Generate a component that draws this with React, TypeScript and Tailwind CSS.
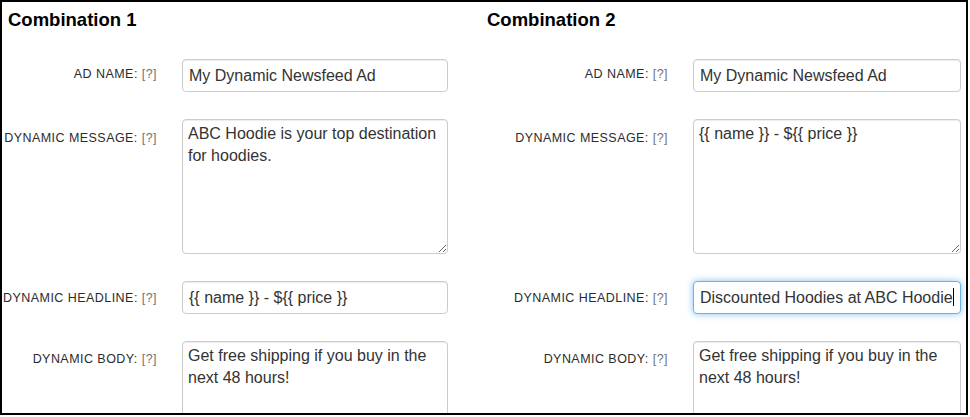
import React from 'react';

type Field = {
  label: string;
  value: string;
  multiline?: boolean;
  focused?: boolean;
  labelPad: string;
};

const left: Field[] = [
  { label: 'Ad Name:', value: 'My Dynamic Newsfeed Ad', labelPad: 'pt-[7px]' },
  {
    label: 'Dynamic Message:',
    value: 'ABC Hoodie is your top destination for hoodies.',
    multiline: true,
    labelPad: 'pt-[11px]',
  },
  { label: 'Dynamic Headline:', value: '{{ name }} - ${{ price }}', labelPad: 'pt-[9px]' },
  {
    label: 'Dynamic Body:',
    value: 'Get free shipping if you buy in the next 48 hours!',
    multiline: true,
    labelPad: 'pt-[10px]',
  },
];

const right: Field[] = [
  { label: 'Ad Name:', value: 'My Dynamic Newsfeed Ad', labelPad: 'pt-[7px]' },
  {
    label: 'Dynamic Message:',
    value: '{{ name }} - ${{ price }}',
    multiline: true,
    labelPad: 'pt-[11px]',
  },
  {
    label: 'Dynamic Headline:',
    value: 'Discounted Hoodies at ABC Hoodie',
    focused: true,
    labelPad: 'pt-[9px]',
  },
  {
    label: 'Dynamic Body:',
    value: 'Get free shipping if you buy in the next 48 hours!',
    multiline: true,
    labelPad: 'pt-[10px]',
  },
];

function Row({ field, labelWidth, inputWidth }: { field: Field; labelWidth: string; inputWidth: string }) {
  return (
    <div className="flex items-start gap-[25px]">
      <div
        className={`${labelWidth} ${field.labelPad} shrink-0 whitespace-nowrap text-right text-[12.5px] leading-[16px] tracking-[0.45px] uppercase text-[#2b2b2b]`}
      >
        {field.label} <span className="text-[#707070]">[?]</span>
      </div>
      {field.multiline ? (
        <textarea
          readOnly
          defaultValue={field.value}
          className={`${inputWidth} h-[135px] shrink-0 rounded-[4px] border border-[#ccc] bg-white px-[5px] py-[3px] text-[16px] leading-[22px] text-[#333] shadow-[inset_0_1px_1px_rgba(0,0,0,0.075)] outline-none`}
        />
      ) : field.focused ? (
        <div
          className={`${inputWidth} h-[33px] shrink-0 overflow-hidden whitespace-nowrap rounded-[4px] border border-[#6fb0e8] bg-white px-[6px] text-[16px] leading-[31px] text-[#333] shadow-[0_0_7px_rgba(82,168,236,0.7)]`}
        >
          {field.value}
          <span className="inline-block h-[18px] w-px translate-y-[3px] bg-black align-baseline" />
        </div>
      ) : (
        <div
          className={`${inputWidth} h-[33px] shrink-0 overflow-hidden whitespace-nowrap rounded-[4px] border border-[#ccc] bg-white px-[6px] text-[16px] leading-[31px] text-[#333] shadow-[inset_0_1px_1px_rgba(0,0,0,0.075)]`}
        >
          {field.value}
        </div>
      )}
    </div>
  );
}

export default function App() {
  return (
    <div className="h-[417px] w-[970px] bg-white font-['Liberation_Sans',Arial,sans-serif]">
      <div className="flex h-[415px] w-[968px] overflow-hidden border-2 border-black bg-white">
        {/* Combination 1 */}
        <div className="w-[478px] shrink-0">
          <h2 className="mt-[6px] pl-[6px] text-[18.5px] font-bold leading-[24px] text-black">Combination 1</h2>
          <div className="mt-[27px] flex flex-col gap-[27px]">
            {left.map((f) => (
              <Row key={f.label} field={f} labelWidth="w-[155px]" inputWidth="w-[266px]" />
            ))}
          </div>
        </div>

        {/* Combination 2 */}
        <div className="flex-1">
          <h2 className="mt-[6px] pl-[7px] text-[18.5px] font-bold leading-[24px] text-black">Combination 2</h2>
          <div className="mt-[27px] flex flex-col gap-[27px]">
            {right.map((f) => (
              <Row key={f.label} field={f} labelWidth="w-[188px]" inputWidth="w-[268px]" />
            ))}
          </div>
        </div>
      </div>
    </div>
  );
}
